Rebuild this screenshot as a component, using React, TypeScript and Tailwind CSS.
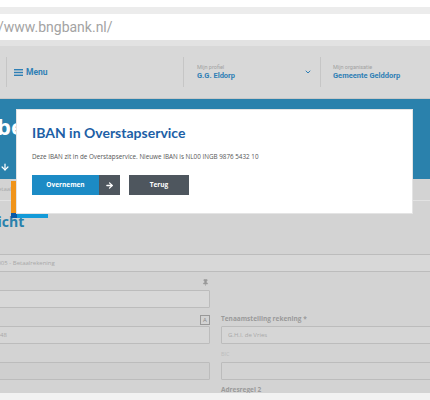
import { ArrowRight, ArrowDown, ChevronDown, Pin } from 'lucide-react';

function Field({ text, className = '', pad = 'pl-[6px]' }: { text?: string; className?: string; pad?: string }) {
  return (
    <div className={`h-[18px] border border-[#bcbcbc] rounded-[1px] flex items-center whitespace-nowrap overflow-hidden text-[6px] text-[#a8a8a8] ${pad} ${className}`}>
      {text}
    </div>
  );
}

function App() {
  return (
    <div className="relative w-[430px] h-[400px] overflow-hidden bg-[#d3d3d3]" style={{ fontFamily: '"Open Sans", sans-serif' }}>
      {/* browser chrome */}
      <div className="h-[7px] bg-white" />
      <div className="h-[7px] bg-[#ececec]" />
      <div className="h-[26px] bg-white flex items-center text-[14px] text-[#a3a3a3] -ml-[2px]" style={{ fontFamily: 'Roboto, sans-serif' }}>
        /www.bngbank.nl/
      </div>
      <div className="h-[6px] bg-[#e2e2e2]" />

      {/* header */}
      <div className="h-[53px] bg-[#d8d8d8] border-b border-[#c8c8c8] flex items-center" style={{ fontFamily: 'Roboto, sans-serif' }}>
        <div className="ml-[6px] h-[30px] border-l border-[#c6c6c6] flex items-center pl-[7px] gap-[3px] text-[#2f7fb5] w-[177px]">
          <svg width="9" height="7" viewBox="0 0 9 7" className="fill-current">
            <rect y="0" width="9" height="1.4" />
            <rect y="2.8" width="9" height="1.4" />
            <rect y="5.6" width="9" height="1.4" />
          </svg>
          <span className="text-[8.5px] font-bold">Menu</span>
        </div>
        <div className="h-[30px] border-l border-[#c6c6c6] flex items-center pl-[13px] pr-[8px] w-[137px]">
          <div className="flex-1 flex flex-col leading-none">
            <span className="text-[5.5px] text-[#a2a2a2]">Mijn profiel</span>
            <span className="text-[7.5px] font-bold text-[#2f7fb5] mt-[2px]">G.G. Eldorp</span>
          </div>
          <ChevronDown size={8} strokeWidth={3} className="text-[#2f7fb5]" />
        </div>
        <div className="h-[30px] border-l border-[#c6c6c6] flex items-center pl-[12px]">
          <div className="flex flex-col leading-none">
            <span className="text-[5.5px] text-[#a2a2a2]">Mijn organisatie</span>
            <span className="text-[7.5px] font-bold text-[#2f7fb5] mt-[2px]">Gemeente Gelddorp</span>
          </div>
        </div>
      </div>

      {/* blue band */}
      <div className="h-[80px] bg-[#2a81ac] flex flex-col text-white">
        <div className="mt-[16px] -ml-[3px] text-[22px] font-bold leading-none">be</div>
        <ArrowDown size={10} strokeWidth={3} className="mt-[25px] ml-[0px]" />
      </div>

      {/* tab strip */}
      <div className="relative h-[22px] border-b border-[#e2e2e2] flex items-center">
        <span className="text-[6px] text-[#a8a8a8] -ml-[6px]">Betaald</span>
        <div className="absolute left-[11px] top-[2px] w-[6px] h-[32px] bg-[#f0941a]" />
        <div className="absolute left-[11px] top-[34px] w-[6px] h-[5px] bg-[#0a5aa8]" />
        <div className="absolute left-[17px] top-[34px] w-[31px] h-[5px] bg-[#139ad8]" />
      </div>
      <div className="text-[14px] font-bold text-[#2a81ac] leading-none mt-[14px] -ml-[43px]">Overzicht</div>

      {/* form */}
      <div className="mt-[25px] -ml-[10px] w-[460px]">
        <Field text="0005 - Betaalrekening" pad="pl-[3px]" className="bg-[#d8d8d8]" />
        <div className="grid grid-cols-[220px_1fr] gap-x-[11px] mt-[7px]">
          <div className="flex flex-col">
            <div className="h-[11px] flex justify-end pr-[1px]">
              <Pin size={7} className="text-[#999] fill-[#999]" />
            </div>
            <Field className="bg-[#d8d8d8]" />
          </div>
          <div />
          <div className="flex flex-col mt-[7px]">
            <div className="h-[11px] flex justify-end items-start">
              <div className="w-[10px] h-[10px] border border-[#999] text-[6px] text-[#888] leading-none flex items-center justify-center">A</div>
            </div>
            <Field text="48" pad="pl-[9px]" className="bg-[#d6d6d6]" />
          </div>
          <div className="flex flex-col mt-[7px]">
            <div className="h-[11px] text-[6.5px] font-bold text-[#9a9a9a] leading-none pt-[1px]">Tenaamstelling rekening *</div>
            <Field text="G.H.I. de Vries" className="bg-[#d6d6d6]" />
          </div>
          <div className="flex flex-col mt-[7px]">
            <div className="h-[11px]" />
            <Field className="bg-[#cfcfcf]" />
          </div>
          <div className="flex flex-col mt-[7px]">
            <div className="h-[11px] text-[5.5px] text-[#bdbdbd] leading-none pt-[1px]">BIC</div>
            <Field className="bg-[#d3d3d3]" />
          </div>
          <div />
          <div className="text-[6.5px] font-bold text-[#9a9a9a] mt-[7px] leading-none">Adresregel 2</div>
        </div>
      </div>
      <div className="absolute left-0 right-0 bottom-0 h-[7px] bg-[#f2f2f2]" />

      {/* modal */}
      <div className="absolute left-[17px] top-[110px] w-[395px] h-[103px] bg-white px-[15px] pt-[16px] shadow-[0_0_0_1px_#e4e4e4]">
        <h2 className="text-[14px] font-bold text-[#1d5fa6] leading-none" style={{ fontFamily: 'Lato, sans-serif' }}>
          IBAN in Overstapservice
        </h2>
        <p className="mt-[14px] text-[6.3px] text-[#555] leading-none">
          Deze IBAN zit in de Overstapservice. Nieuwe IBAN is NL00 INGB 9876 5432 10
        </p>
        <div className="mt-[15px] flex gap-[9px]">
          <button className="h-[20px] flex text-white text-[6.5px] font-bold">
            <span className="w-[67px] h-full bg-[#1c8bc5] flex items-center justify-center">Overnemen</span>
            <span className="w-[21px] h-full bg-[#4e565e] flex items-center justify-center">
              <ArrowRight size={9} strokeWidth={3.5} />
            </span>
          </button>
          <button className="h-[20px] w-[60px] bg-[#4e565e] text-white text-[6.5px] font-bold flex items-center justify-center">
            Terug
          </button>
        </div>
      </div>
    </div>
  );
}

export default App;
